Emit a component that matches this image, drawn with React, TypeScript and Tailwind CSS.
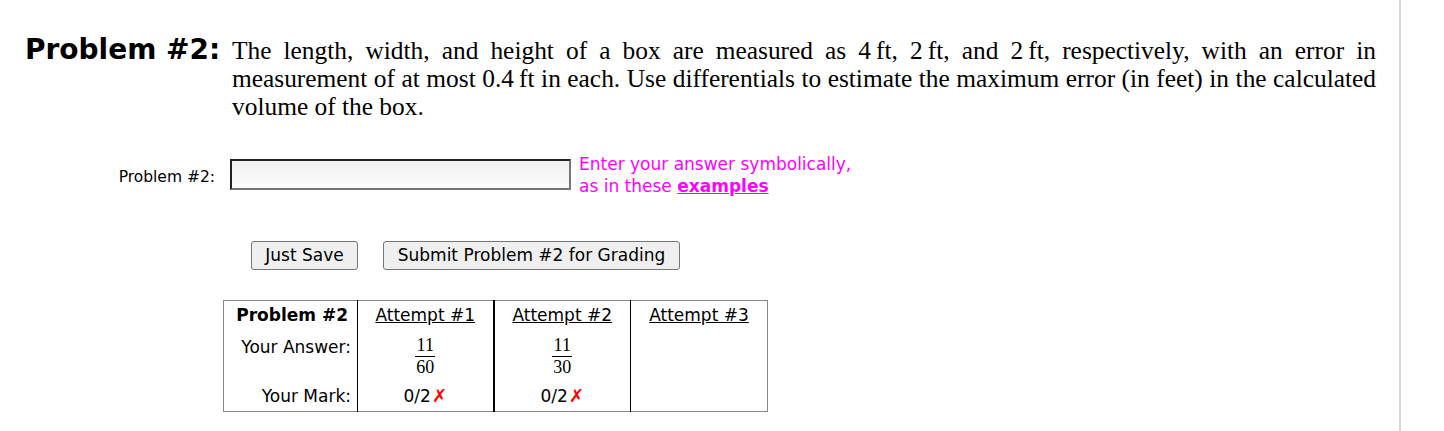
import React from 'react';

const sans = "font-['DejaVu_Sans','Verdana',sans-serif]";
const serif = "font-['Liberation_Serif','Times_New_Roman',serif]";

function Fraction({ num, den }: { num: string; den: string }) {
  return (
    <span className={`inline-flex flex-col items-center ${serif} text-[18px] leading-[17px] text-black`}>
      <span className="px-[1px]">{num}</span>
      <span className="w-full h-px bg-black my-[2px]" />
      <span className="px-[1px]">{den}</span>
    </span>
  );
}

function Mark() {
  return (
    <span>
      0/2<span className="text-[#ff0000] font-bold text-[18px] ml-[1px]">✗</span>
    </span>
  );
}

export default function App() {
  return (
    <div className={`flex w-[1444px] h-[431px] bg-white overflow-hidden ${sans}`}>
      <div className="w-[1401px] h-full border-r-2 border-[#d6d6d6] shrink-0">
        {/* Problem statement */}
        <div className="flex items-baseline pt-[36px] pl-[25px]">
          <h2 className="w-[207px] shrink-0 text-[28px] font-bold leading-[28px] text-black">
            Problem #2:
          </h2>
          <p className={`w-[1144px] ${serif} text-[25.4px] leading-[28px] text-justify text-black`}>
            The length, width, and height of a box are measured as 4&thinsp;ft, 2&thinsp;ft, and 2&thinsp;ft, respectively, with an error in measurement of at most 0.4&thinsp;ft in each. Use differentials to estimate the maximum error (in feet) in the calculated volume of the box.
          </p>
        </div>

        {/* Answer input */}
        <div className="flex items-start mt-[33px]">
          <label className="w-[216px] shrink-0 text-right pr-[1px] pt-[15px] text-[15.5px] leading-[18px] text-black">
            Problem #2:
          </label>
          <input
            type="text"
            className="ml-[14px] mt-[6px] w-[341px] h-[31px] border-2 border-t-[#222] border-l-[#222] border-b-[#777] border-r-[#777] bg-gradient-to-b from-[#f0f0f0] to-[#fcfcfc] outline-none"
          />
          <div className="ml-[8px] text-[17px] leading-[22px] text-[#ff00ff]">
            <div>Enter your answer symbolically,</div>
            <div>
              as in these <a href="#" className="font-bold underline">examples</a>
            </div>
          </div>
        </div>

        {/* Buttons */}
        <div className="flex gap-[25px] mt-[44px] ml-[251px]">
          <button className="w-[107px] h-[29px] text-[17px] text-black bg-[#efefef] border border-[#767676] rounded-[3px]">
            Just Save
          </button>
          <button className="w-[297px] h-[29px] text-[17px] text-black bg-[#efefef] border border-[#767676] rounded-[3px]">
            Submit Problem #2 for Grading
          </button>
        </div>

        {/* Attempts table */}
        <table className="mt-[30px] ml-[223px] border border-[#888] border-collapse text-[17px] leading-[20px] text-black">
          <tbody>
            <tr>
              <th className="w-[134px] text-right pr-[9px] pt-[4px] font-bold border-r border-black">Problem #2</th>
              <td className="w-[136px] text-center pt-[4px] border-r-2 border-black"><a href="#" className="underline">Attempt #1</a></td>
              <td className="w-[137px] text-center pt-[4px] border-r border-black"><a href="#" className="underline">Attempt #2</a></td>
              <td className="w-[137px] text-center pt-[4px]"><a href="#" className="underline">Attempt #3</a></td>
            </tr>
            <tr>
              <td className="text-right pr-[6px] align-top pt-[12px] border-r border-black">Your Answer:</td>
              <td className="text-center pt-[10px] border-r-2 border-black"><Fraction num="11" den="60" /></td>
              <td className="text-center pt-[10px] border-r border-black"><Fraction num="11" den="30" /></td>
              <td />
            </tr>
            <tr>
              <td className="text-right pr-[6px] pt-[10px] pb-[5px] border-r border-black">Your Mark:</td>
              <td className="text-center pt-[10px] pb-[5px] border-r-2 border-black"><Mark /></td>
              <td className="text-center pt-[10px] pb-[5px] border-r border-black"><Mark /></td>
              <td />
            </tr>
          </tbody>
        </table>
      </div>
    </div>
  );
}
